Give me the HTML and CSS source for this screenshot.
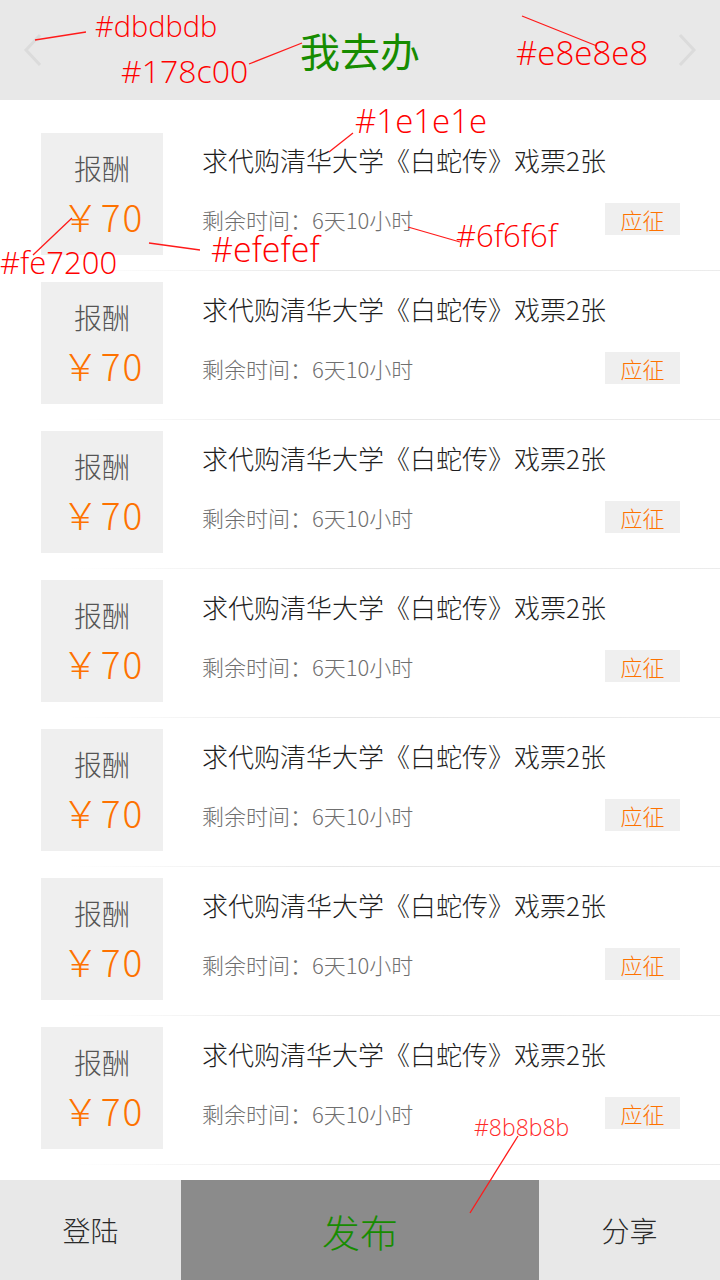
FILE: index.html
```html
<!DOCTYPE html>
<html lang="zh-CN">
<head>
<meta charset="utf-8">
<title>我去办</title>
<link rel="stylesheet" href="styles.css">
</head>
<body>
<div class="app">
  <header class="topbar">
    <svg class="chev" viewBox="0 0 20 34" width="20" height="34"><polyline points="17,2 3,17 17,32"/></svg>
    <h1 class="title">我去办</h1>
    <svg class="chev" viewBox="0 0 20 34" width="20" height="34"><polyline points="3,2 17,17 3,32"/></svg>
  </header>

  <main class="list">
    <div class="item">
      <div class="reward"><span class="reward-label">报酬</span><span class="reward-price"><span class="yen">￥</span><span class="amount">70</span></span></div>
      <div class="info">
        <div class="info-title">求代购清华大学《白蛇传》戏票2张</div>
        <div class="info-row"><span class="info-time">剩余时间：6天10小时</span><span class="tag">应征</span></div>
      </div>
    </div>
    <div class="item">
      <div class="reward"><span class="reward-label">报酬</span><span class="reward-price"><span class="yen">￥</span><span class="amount">70</span></span></div>
      <div class="info">
        <div class="info-title">求代购清华大学《白蛇传》戏票2张</div>
        <div class="info-row"><span class="info-time">剩余时间：6天10小时</span><span class="tag">应征</span></div>
      </div>
    </div>
    <div class="item">
      <div class="reward"><span class="reward-label">报酬</span><span class="reward-price"><span class="yen">￥</span><span class="amount">70</span></span></div>
      <div class="info">
        <div class="info-title">求代购清华大学《白蛇传》戏票2张</div>
        <div class="info-row"><span class="info-time">剩余时间：6天10小时</span><span class="tag">应征</span></div>
      </div>
    </div>
    <div class="item">
      <div class="reward"><span class="reward-label">报酬</span><span class="reward-price"><span class="yen">￥</span><span class="amount">70</span></span></div>
      <div class="info">
        <div class="info-title">求代购清华大学《白蛇传》戏票2张</div>
        <div class="info-row"><span class="info-time">剩余时间：6天10小时</span><span class="tag">应征</span></div>
      </div>
    </div>
    <div class="item">
      <div class="reward"><span class="reward-label">报酬</span><span class="reward-price"><span class="yen">￥</span><span class="amount">70</span></span></div>
      <div class="info">
        <div class="info-title">求代购清华大学《白蛇传》戏票2张</div>
        <div class="info-row"><span class="info-time">剩余时间：6天10小时</span><span class="tag">应征</span></div>
      </div>
    </div>
    <div class="item">
      <div class="reward"><span class="reward-label">报酬</span><span class="reward-price"><span class="yen">￥</span><span class="amount">70</span></span></div>
      <div class="info">
        <div class="info-title">求代购清华大学《白蛇传》戏票2张</div>
        <div class="info-row"><span class="info-time">剩余时间：6天10小时</span><span class="tag">应征</span></div>
      </div>
    </div>
    <div class="item">
      <div class="reward"><span class="reward-label">报酬</span><span class="reward-price"><span class="yen">￥</span><span class="amount">70</span></span></div>
      <div class="info">
        <div class="info-title">求代购清华大学《白蛇传》戏票2张</div>
        <div class="info-row"><span class="info-time">剩余时间：6天10小时</span><span class="tag">应征</span></div>
      </div>
    </div>
  </main>

  <footer class="tabbar">
    <div class="tab">登陆</div>
    <div class="tab tab-main">发布</div>
    <div class="tab">分享</div>
  </footer>

  <div class="notes">
    <svg class="note-lines" viewBox="0 0 720 1280" width="720" height="1280">
      <line x1="35" y1="40" x2="86" y2="32"/>
      <line x1="249" y1="64" x2="302" y2="43"/>
      <line x1="329" y1="152" x2="353" y2="133"/>
      <line x1="522" y1="16" x2="597" y2="46"/>
      <line x1="33" y1="255" x2="72" y2="218"/>
      <line x1="149" y1="243" x2="200" y2="250"/>
      <line x1="408" y1="227" x2="460" y2="242"/>
      <line x1="518" y1="1136" x2="470" y2="1213"/>
    </svg>
    <span class="note n-dbdbdb">#dbdbdb</span>
    <span class="note n-178c00">#178c00</span>
    <span class="note n-1e1e1e">#1e1e1e</span>
    <span class="note n-e8e8e8">#e8e8e8</span>
    <span class="note n-fe7200">#fe7200</span>
    <span class="note n-efefef">#efefef</span>
    <span class="note n-6f6f6f">#6f6f6f</span>
    <span class="note n-8b8b8b">#8b8b8b</span>
  </div>
</div>
</body>
</html>
```

FILE: styles.css
```css
* { box-sizing: border-box; }

html, body {
  margin: 0;
  padding: 0;
  background: #ffffff;
}

body {
  font-family: "Noto Sans CJK SC", "Noto Sans", sans-serif;
  font-weight: 300;
}

.app {
  position: relative;
  width: 720px;
  height: 1280px;
  overflow: hidden;
  display: flex;
  flex-direction: column;
  background: #ffffff;
}

/* ---------- top bar ---------- */
.topbar {
  height: 100px;
  flex: none;
  background: #e8e8e8;
  display: flex;
  align-items: center;
  justify-content: space-between;
  padding: 0 23px;
}

.chev polyline {
  fill: none;
  stroke: #dbdbdb;
  stroke-width: 3;
}

.title {
  margin: 0;
  font-size: 40px;
  font-weight: 400;
  line-height: 50px;
  color: #178c00;
}

/* ---------- list ---------- */
.list {
  flex: 1;
  padding-top: 22px;
}

.item {
  display: flex;
  padding: 11px 40px 15px 41px;
  border-bottom: 1px solid #e4e4e4;
  border-image: linear-gradient(to right, rgba(228,228,228,0) 70px, #e6e6e6 340px, #ececec 720px) 1;
}

.reward {
  width: 122px;
  height: 122px;
  flex: none;
  background: #efefef;
  display: flex;
  flex-direction: column;
  align-items: center;
  padding-top: 18px;
}

.reward-label {
  font-size: 28px;
  line-height: 34px;
  color: #555555;
}

.reward-price {
  margin-top: 10px;
  font-size: 37px;
  line-height: 42px;
  color: #fe7200;
  display: flex;
  align-items: baseline;
}

.yen {
  margin-right: 2px;
}

.amount {
  letter-spacing: 2px;
  margin-right: -2px;
}

.info {
  flex: 1;
  margin-left: 39px;
  padding-top: 12px;
}

.info-title {
  font-size: 26px;
  line-height: 30px;
  color: #1e1e1e;
  white-space: nowrap;
}

.info-row {
  margin-top: 28px;
  display: flex;
  align-items: center;
  justify-content: space-between;
}

.info-time {
  font-size: 22px;
  line-height: 26px;
  color: #6f6f6f;
}

.tag {
  width: 75px;
  height: 32px;
  background: #efefef;
  color: #fe7200;
  font-size: 22px;
  line-height: 32px;
  text-align: center;
}

/* ---------- bottom bar ---------- */
.tabbar {
  height: 100px;
  flex: none;
  display: grid;
  grid-template-columns: 181px 358px 181px;
}

.tab {
  background: #e8e8e8;
  display: flex;
  align-items: center;
  justify-content: center;
  font-size: 28px;
  color: #2a2a2a;
}

.tab-main {
  background: #8b8b8b;
  color: #178c00;
  font-size: 38px;
}

/* ---------- design annotations ---------- */
.notes {
  position: absolute;
  inset: 0;
  pointer-events: none;
}

.note-lines {
  position: absolute;
  left: 0;
  top: 0;
}

.note-lines line {
  stroke: #ff1a1a;
  stroke-width: 1.3;
}

.note {
  position: absolute;
  font-family: "Open Sans", "Liberation Sans", sans-serif;
  font-weight: 300;
  line-height: 0.8;
  color: #ff0000;
  white-space: nowrap;
}

.n-dbdbdb { left: 95px;  top: 14px;  font-size: 29px; }
.n-178c00 { left: 121px; top: 58px;  font-size: 32px; }
.n-1e1e1e { left: 355px; top: 108px; font-size: 33px; }
.n-e8e8e8 { left: 516px; top: 40px;  font-size: 33px; }
.n-fe7200 { left: 0;     top: 250px; font-size: 31px; }
.n-efefef { left: 211px; top: 236px; font-size: 34px; }
.n-6f6f6f { left: 456px; top: 223px; font-size: 31px; }
.n-8b8b8b { left: 474px; top: 1118px; font-size: 23px; color: #ff2a2a; }
```
